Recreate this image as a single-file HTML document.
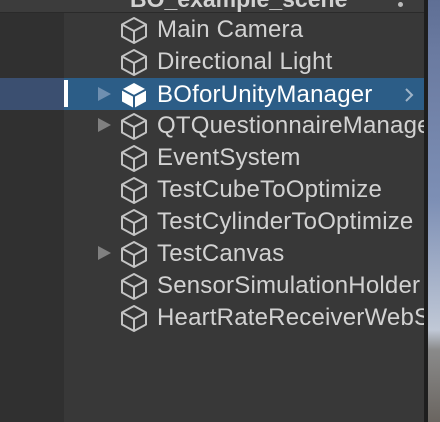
<!DOCTYPE html><html><head><style>
body{margin:0;width:440px;height:422px;overflow:hidden;background:#383838;position:relative;font-family:"Liberation Sans",sans-serif;}
.l{position:absolute;left:0;top:0;width:64px;height:422px;background:#303030}
.hd{position:absolute;left:0;top:0;width:424px;height:12px;background:#3c3c3c;border-bottom:1px solid #2a2a2a;overflow:hidden}
.r{position:absolute;left:0;width:424px;height:32px;overflow:hidden}
.t{position:absolute;left:157px;top:3px;font-size:24px;color:#d2d2d2;white-space:nowrap;letter-spacing:0.2px}
.i{position:absolute;left:120px;top:3px}
.a{position:absolute;left:98px;top:9px;width:0;height:0;border-left:13px solid #808080;border-top:7px solid transparent;border-bottom:7px solid transparent}
.sb{position:absolute;left:424px;top:0;width:4px;height:422px;background:#1e1e1e}
.sc{position:absolute;left:428px;top:0;width:12px;height:422px;background:linear-gradient(#5f6f95 0,#6a7aa0 50px,#7d8fb5 200px,#c0c8d6 330px,#8a8a8a 350px,#6a6560 422px)}
</style></head><body>
<div class="l"></div>
<div class="hd"><div style="position:absolute;left:130px;top:-14px;font-size:23px;color:#d2d2d2;font-weight:bold">BO_example_scene</div><div style="position:absolute;left:398px;top:2px;width:5px;height:5px;border-radius:50%;background:#bbb"></div></div>
<div class="r" style="top:78px;background:#2c5d87"><div style="position:absolute;left:0;top:0;width:64px;height:32px;background:#3b4f70"></div><div style="position:absolute;left:64px;top:2px;width:4px;height:27px;background:#fff"></div><div class="a" style="border-left-color:#6f8fb0"></div>
<svg class="i" width="28" height="28" viewBox="0 0 28 28"><path d="M14 2L26 8.5V20.5L14 27L2 20.5V8.5Z" fill="#fff"/><path d="M2 8.5L14 15L26 8.5M14 15V27" stroke="#2c5d87" stroke-width="2" fill="none"/></svg>
<div class="t" style="color:#fff">BOforUnityManager</div>
<svg style="position:absolute;left:403px;top:9px" width="12" height="16" viewBox="0 0 12 16"><path d="M3 2L9 8L3 14" stroke="#a0b4c8" stroke-width="2" fill="none"/></svg></div>
<div id="rows"></div>
<div class="sb"></div><div class="sc"></div>
<script>
var n=["Main Camera","Directional Light",null,"QTQuestionnaireManager","EventSystem","TestCubeToOptimize","TestCylinderToOptimize","TestCanvas","SensorSimulationHolder","HeartRateReceiverWebSocket"];
var ar=[3,7];var h="";
n.forEach(function(t,k){if(!t)return;var y=13+32*k;h+='<div class="r" style="top:'+y+'px">'+(ar.indexOf(k)>=0?'<div class="a"></div>':'')+'<svg class="i" width="28" height="28" viewBox="0 0 28 28"><path d="M14 2L26 8.5V20.5L14 27L2 20.5V8.5ZM2 8.5L14 15L26 8.5M14 15V27" stroke="#c4c4c4" stroke-width="2" fill="none" stroke-linejoin="round"/></svg><div class="t">'+t+'</div></div>';});
document.getElementById("rows").innerHTML=h;
</script>
</body></html>
